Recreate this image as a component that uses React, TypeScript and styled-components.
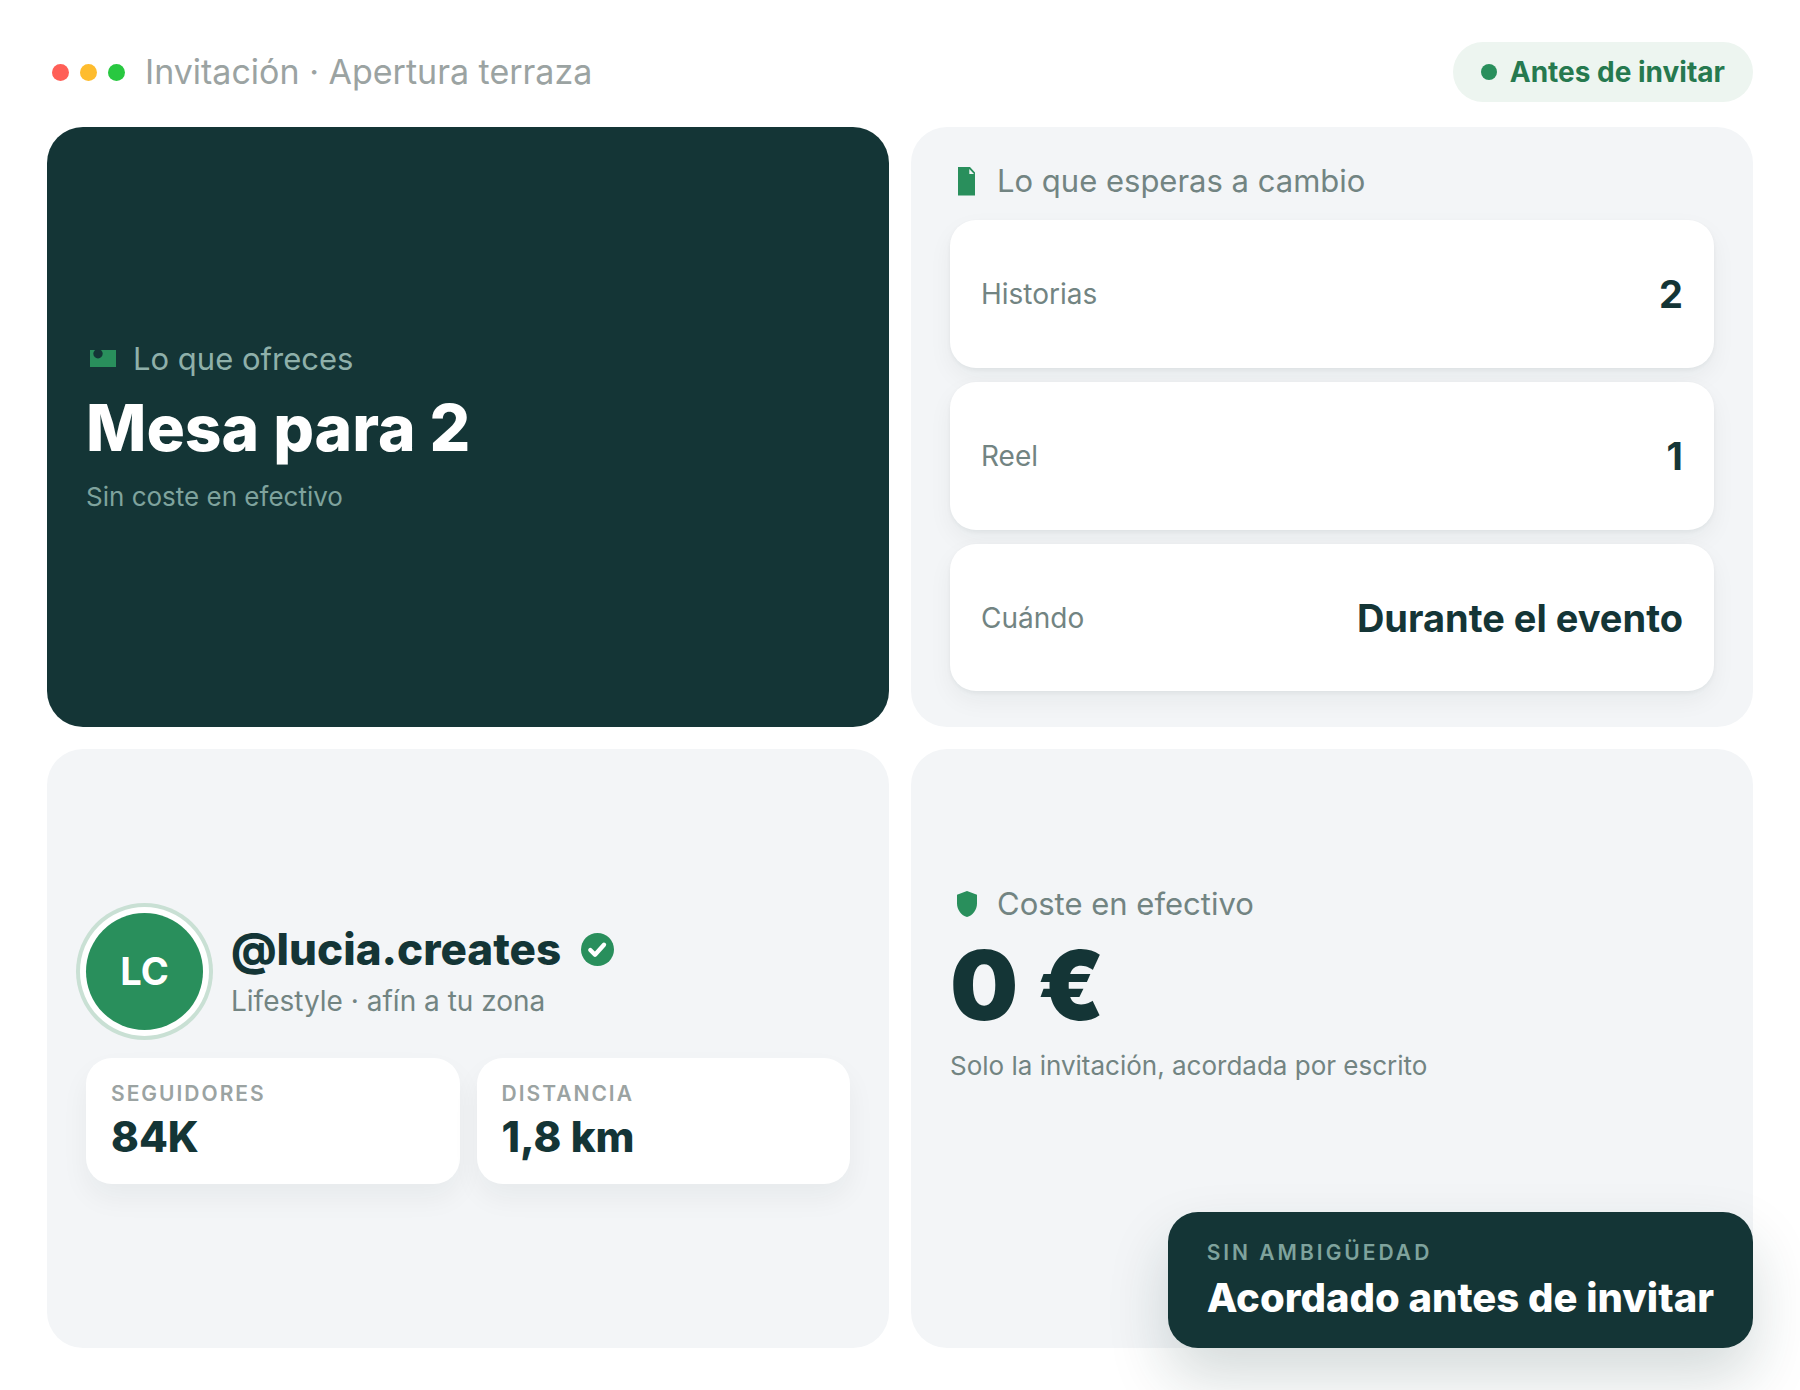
import React from "react";
import styled, { createGlobalStyle, ThemeProvider, css } from "styled-components";

const theme = {
  ink: "#143536",
  green: "#298f5c",
  greenText: "#26794f",
  mint: "#edf5f0",
  ring: "#c9e0d4",
  panel: "#f3f5f7",
  muted: "#728482",
  faint: "#9ba3a2",
  onInk: "#8fb0aa",
  onInkSoft: "#7fa39d",
  white: "#ffffff",
};

const GlobalStyle = createGlobalStyle`
  *, *::before, *::after { box-sizing: border-box; }
  body {
    margin: 0;
    background: #ffffff;
    font-family: Inter, "Liberation Sans", sans-serif;
    -webkit-font-smoothing: antialiased;
  }
  h1, h2, p, dl, dt, dd { margin: 0; font-weight: inherit; }
`;

const Page = styled.main`
  display: flex;
  flex-direction: column;
  gap: 25px;
  min-height: 100vh;
  padding: 42px 47px;
  color: ${({ theme }) => theme.ink};
`;

const Header = styled.header`
  display: flex;
  align-items: center;
  justify-content: space-between;
  gap: 24px;
`;

const WindowBar = styled.div`
  display: flex;
  align-items: center;
  gap: 20px;
  padding-left: 5px;
`;

const Lights = styled.div`
  display: flex;
  gap: 11px;
`;

const Light = styled.span<{ $color: string }>`
  width: 17px;
  height: 17px;
  border-radius: 50%;
  background: ${({ $color }) => $color};
`;

const WindowTitle = styled.h1`
  color: ${({ theme }) => theme.faint};
  font-size: 34px;
  line-height: 40px;
`;

const Status = styled.p`
  display: flex;
  align-items: center;
  gap: 13px;
  height: 60px;
  padding: 0 28px;
  border-radius: 30px;
  background: ${({ theme }) => theme.mint};
  color: ${({ theme }) => theme.greenText};
  font-size: 28px;
  font-weight: 700;
  white-space: nowrap;
`;

const StatusDot = styled.span`
  width: 16px;
  height: 16px;
  border-radius: 50%;
  background: ${({ theme }) => theme.green};
`;

const Board = styled.div`
  position: relative;
  flex: 1;
  display: grid;
  grid-template-columns: repeat(2, minmax(0, 1fr));
  grid-template-rows: repeat(2, minmax(0, 1fr));
  gap: 22px;
`;

const Panel = styled.section<{ $dark?: boolean; $raised?: boolean }>`
  display: flex;
  flex-direction: column;
  justify-content: center;
  padding: 35px 39px;
  border-radius: 36px;
  background: ${({ theme, $dark }) => ($dark ? theme.ink : theme.panel)};
  color: ${({ theme, $dark }) => ($dark ? theme.white : theme.ink)};
  ${({ $raised }) => $raised && css`padding-bottom: 164px;`}
`;

const PanelLabel = styled.h2<{ $dark?: boolean }>`
  display: flex;
  align-items: center;
  gap: 15px;
  color: ${({ theme, $dark }) => ($dark ? theme.onInk : theme.muted)};
  font-size: 31px;
  line-height: 38px;
`;

const Icon = styled.svg`
  flex: none;
  width: 32px;
  height: 32px;
  fill: ${({ theme }) => theme.green};
`;

const Offer = styled.p`
  margin-top: 14px;
  font-size: 64px;
  font-weight: 800;
  line-height: 72px;
`;

const Amount = styled.p`
  margin-top: 14px;
  font-size: 96px;
  font-weight: 900;
  line-height: 96px;
`;

const Note = styled.p<{ $dark?: boolean }>`
  margin-top: 17px;
  color: ${({ theme, $dark }) => ($dark ? theme.onInkSoft : theme.muted)};
  font-size: 26px;
  line-height: 32px;
`;

const Terms = styled.dl`
  flex: 1;
  display: flex;
  flex-direction: column;
  gap: 14px;
  margin-top: 20px;
`;

const Term = styled.div`
  flex: 1;
  display: flex;
  align-items: center;
  justify-content: space-between;
  padding: 0 31px;
  border-radius: 26px;
  background: ${({ theme }) => theme.white};
  box-shadow: 0 2px 4px rgba(21, 40, 36, 0.05), 0 10px 24px rgba(21, 40, 36, 0.05);
`;

const TermName = styled.dt`
  color: ${({ theme }) => theme.muted};
  font-size: 28px;
`;

const TermValue = styled.dd`
  font-size: 38px;
  font-weight: 700;
`;

const Profile = styled.div`
  display: flex;
  align-items: center;
  gap: 28px;
`;

const Avatar = styled.div`
  display: grid;
  place-items: center;
  flex: none;
  width: 117px;
  height: 117px;
  border-radius: 50%;
  background: ${({ theme }) => theme.green};
  box-shadow: 0 0 0 6px ${({ theme }) => theme.white}, 0 0 0 10px ${({ theme }) => theme.ring};
  color: ${({ theme }) => theme.white};
  font-size: 38px;
  font-weight: 700;
`;

const Handle = styled.h2`
  display: flex;
  align-items: center;
  gap: 20px;
  font-size: 44px;
  font-weight: 800;
  line-height: 60px;
`;

const Check = styled.svg`
  flex: none;
  width: 33px;
  height: 33px;
`;

const Niche = styled.p`
  color: ${({ theme }) => theme.muted};
  font-size: 28px;
  line-height: 44px;
`;

const Stats = styled.dl`
  display: grid;
  grid-template-columns: repeat(2, minmax(0, 1fr));
  gap: 17px;
  margin-top: 28px;
`;

const Stat = styled.div`
  padding: 24px 25px 21px;
  border-radius: 26px;
  background: ${({ theme }) => theme.white};
  box-shadow: 0 14px 28px rgba(21, 40, 36, 0.05);
`;

const StatName = styled.dt`
  color: ${({ theme }) => theme.faint};
  font-size: 21px;
  font-weight: 600;
  letter-spacing: 2px;
  line-height: 24px;
`;

const StatValue = styled.dd`
  margin-top: 5px;
  font-size: 42px;
  font-weight: 800;
  line-height: 52px;
`;

const Callout = styled.aside`
  position: absolute;
  right: 0;
  bottom: 0;
  padding: 28px 39px 24px;
  border-radius: 30px;
  background: ${({ theme }) => theme.ink};
  box-shadow: 0 30px 60px rgba(21, 53, 54, 0.18);
  color: ${({ theme }) => theme.white};
`;

const CalloutLabel = styled.p`
  color: ${({ theme }) => theme.onInkSoft};
  font-size: 21px;
  font-weight: 600;
  letter-spacing: 3px;
  line-height: 26px;
`;

const CalloutText = styled.p`
  margin-top: 6px;
  font-size: 40px;
  font-weight: 800;
  line-height: 52px;
  white-space: nowrap;
`;

const terms = [
  { name: "Historias", value: "2" },
  { name: "Reel", value: "1" },
  { name: "Cuándo", value: "Durante el evento" },
];

const stats = [
  { name: "SEGUIDORES", value: "84K" },
  { name: "DISTANCIA", value: "1,8 km" },
];

const TicketIcon = () => (
  <Icon viewBox="0 0 32 32" aria-hidden="true">
    <path d="M4 7h26v17H4z" />
    <circle cx="12" cy="10.800" r="4.700" fill={theme.ink} />
  </Icon>
);

const FileIcon = () => (
  <Icon viewBox="0 0 32 32" aria-hidden="true">
    <path fillRule="evenodd" d="M8 2h12l5 5.500V30.500H8zM19.300 4v5h4.700z" />
  </Icon>
);

const ShieldIcon = () => (
  <Icon viewBox="0 0 32 32" aria-hidden="true">
    <path d="M17 3l10 3.800v8.600c0 6.200-4.200 12-10 13.600-5.800-1.600-10-7.400-10-13.600V6.800z" />
  </Icon>
);

export default function App() {
  return (
    <ThemeProvider theme={theme}>
      <GlobalStyle />
      <Page>
        <Header>
          <WindowBar>
            <Lights aria-hidden="true">
              <Light $color="#ff5f57" />
              <Light $color="#febc2e" />
              <Light $color="#28c840" />
            </Lights>
            <WindowTitle>Invitación · Apertura terraza</WindowTitle>
          </WindowBar>
          <Status>
            <StatusDot />
            Antes de invitar
          </Status>
        </Header>

        <Board>
          <Panel $dark>
            <PanelLabel $dark>
              <TicketIcon />
              Lo que ofreces
            </PanelLabel>
            <Offer>Mesa para 2</Offer>
            <Note $dark>Sin coste en efectivo</Note>
          </Panel>

          <Panel>
            <PanelLabel>
              <FileIcon />
              Lo que esperas a cambio
            </PanelLabel>
            <Terms>
              {terms.map((term) => (
                <Term key={term.name}>
                  <TermName>{term.name}</TermName>
                  <TermValue>{term.value}</TermValue>
                </Term>
              ))}
            </Terms>
          </Panel>

          <Panel>
            <Profile>
              <Avatar>LC</Avatar>
              <div>
                <Handle>
                  @lucia.creates
                  <Check viewBox="0 0 33 33" role="img" aria-label="Verificada">
                    <circle cx="16.500" cy="16.500" r="16.500" fill={theme.green} />
                    <path
                      d="M9.300 17l4.700 4.700 9-10"
                      fill="none"
                      stroke="#fff"
                      strokeWidth="4.300"
                      strokeLinecap="round"
                      strokeLinejoin="round"
                    />
                  </Check>
                </Handle>
                <Niche>Lifestyle · afín a tu zona</Niche>
              </div>
            </Profile>
            <Stats>
              {stats.map((stat) => (
                <Stat key={stat.name}>
                  <StatName>{stat.name}</StatName>
                  <StatValue>{stat.value}</StatValue>
                </Stat>
              ))}
            </Stats>
          </Panel>

          <Panel $raised>
            <PanelLabel>
              <ShieldIcon />
              Coste en efectivo
            </PanelLabel>
            <Amount>0 €</Amount>
            <Note>Solo la invitación, acordada por escrito</Note>
          </Panel>

          <Callout>
            <CalloutLabel>SIN AMBIGÜEDAD</CalloutLabel>
            <CalloutText>Acordado antes de invitar</CalloutText>
          </Callout>
        </Board>
      </Page>
    </ThemeProvider>
  );
}
